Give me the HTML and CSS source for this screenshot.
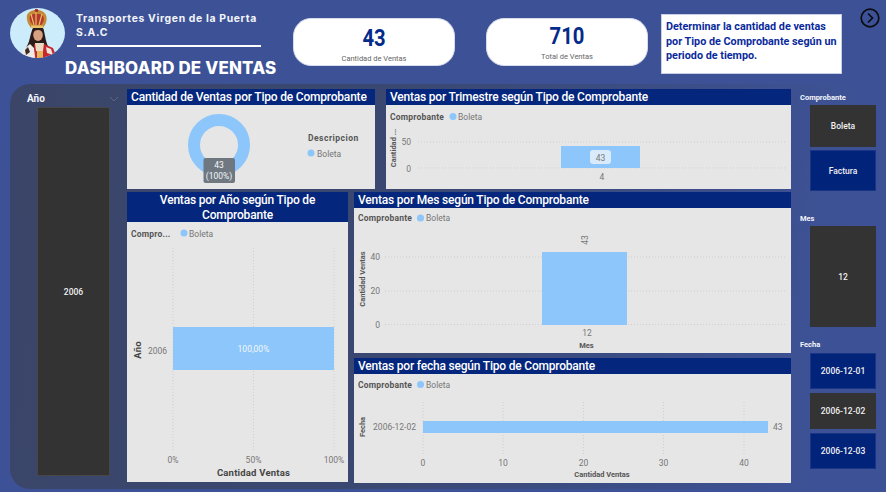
FILE: index.html
```html
<!DOCTYPE html>
<html lang="es">
<head>
<meta charset="utf-8">
<title>Dashboard de Ventas</title>
<link rel="stylesheet" href="styles.css">
</head>
<body>
<div class="page">
  <header class="top">
    <div class="brand">
      <svg class="logo" width="56" height="50" viewBox="0 0 56 50">
        <defs><clipPath id="lc"><ellipse cx="27.500" cy="25" rx="27.500" ry="25"/></clipPath></defs>
        <g clip-path="url(#lc)">
          <rect width="56" height="50" fill="#cdecfb"/>
          <path d="M23 20 C20 26 20 33 17 38 L12 46 L42 46 L37 36 C35 30 35 25 33 20 Z" fill="#2b1c1a"/>
          <path d="M10 50 L13 42 L20 36 L24 40 L26 50 Z" fill="#efe9e4"/>
          <path d="M15 42 L18 39 L20 44 L16 47 Z" fill="#3a2a2a"/>
          <path d="M24 36 L34 36 L43 40 L47 50 L25 50 Z" fill="#c8262e"/>
          <path d="M25 35 h9 l-1 8 h-7 z" fill="#e9d9c0"/>
          <path d="M27 43 h6 v7 h-6 z" fill="#e2b95e"/>
          <path d="M36 39 l5 2 l2 6 l-6 -2 z" fill="#f0e6dc"/>
          <ellipse cx="28" cy="27" rx="4.800" ry="6" fill="#d6a081"/>
          <path d="M23 25 C24 21 32 21 33 25 L33.500 21 L22.500 21 Z" fill="#2b1c1a"/>
          <path d="M17 7 C16 13 19 17 21 20 L33 20 C35 17 38 13 36 7 C34 3 30 2 27 2 C23 2 19 3 17 7 Z" fill="#c48a35"/>
          <path d="M20 8 C19 12 21 15 23 17 L31 17 C33 15 35 12 33 8 C31 5 22 5 20 8 Z" fill="#b5382e"/>
          <path d="M26 3 V17 M21 6 L24 17 M32 6 L29 17" stroke="#e6bd62" stroke-width="1.200" fill="none"/>
          <circle cx="26.500" cy="2.500" r="1.800" fill="#a8322a"/>
          <rect x="21" y="17.500" width="12" height="2.500" fill="#e8c266"/>
        </g>
      </svg>
      <div class="brand-text">
        <div class="company">Transportes Virgen de la Puerta<br>S.A.C</div>
        <div class="rule"></div>
      </div>
      <h1 class="title">DASHBOARD DE VENTAS</h1>
    </div>
    <div class="kpi kpi-first"><div class="kpi-value">43</div><div class="kpi-label">Cantidad de Ventas</div></div>
    <div class="kpi kpi-second"><div class="kpi-value">710</div><div class="kpi-label">Total de Ventas</div></div>
    <p class="note">Determinar la cantidad de ventas por Tipo de Comprobante según un periodo de tiempo.</p>
    <svg class="next" width="20" height="20" viewBox="0 0 20 20">
      <circle cx="10" cy="10" r="8.800" fill="none" stroke="#0b0b12" stroke-width="1.700"/>
      <path d="M8 5.500 L12.500 10 L8 14.500" fill="none" stroke="#0b0b12" stroke-width="1.700"/>
    </svg>
  </header>

  <main class="panel">
    <section class="year-slicer">
      <div class="year-head"><span class="slicer-label year-label">Año</span>
        <svg class="chev" width="10" height="6" viewBox="0 0 10 6"><path d="M1 1 L5 5 L9 1" fill="none" stroke="#5d6680" stroke-width="1"/></svg>
      </div>
      <div class="tile tile-dark year-tile">2006</div>
    </section>

    <section class="charts">
      <div class="row row-top">
        <article class="visual v-donut">
          <h2 class="vh">Cantidad de Ventas por Tipo de Comprobante</h2>
          <div class="vb">
            <svg width="248" height="84" viewBox="127 105 248 84">
              <circle cx="219" cy="145" r="25" fill="none" stroke="#8cc6fa" stroke-width="12"/>
              <rect x="203.500" y="158" width="31.500" height="25" rx="2" fill="#6f7881"/>
              <text class="t-w" x="219" y="168" text-anchor="middle">43</text>
              <text class="t-w" x="219" y="179" text-anchor="middle">(100%)</text>
              <text class="t-b t-lg" x="308" y="141">Descripcion</text>
              <circle cx="311" cy="153" r="3.500" fill="#8cc6fa"/>
              <text class="t-g" x="317" y="156.500">Boleta</text>
            </svg>
          </div>
        </article>
        <article class="visual v-quarter">
          <h2 class="vh">Ventas por Trimestre según Tipo de Comprobante</h2>
          <div class="vb">
            <svg width="405" height="84" viewBox="386 105 405 84">
              <text class="t-b" x="390" y="120">Comprobante</text>
              <circle cx="453" cy="116.500" r="3.500" fill="#8cc6fa"/>
              <text class="t-g" x="458" y="120">Boleta</text>
              <text class="t-bs" transform="translate(396 148) rotate(-90)" text-anchor="middle">Cantidad ...</text>
              <text class="t-g" x="411" y="145" text-anchor="end">50</text>
              <text class="t-g" x="411" y="172" text-anchor="end">0</text>
              <line class="gl" x1="418" y1="142" x2="786" y2="142"/>
              <line class="gl" x1="418" y1="168" x2="786" y2="168"/>
              <rect x="561" y="146" width="79" height="22" fill="#8cc6fa"/>
              <rect x="590" y="150" width="21" height="14" rx="3" fill="#d9ebfb"/>
              <text class="t-g" x="600.500" y="160.500" text-anchor="middle">43</text>
              <text class="t-g" x="602" y="180" text-anchor="middle">4</text>
            </svg>
          </div>
        </article>
      </div>
      <div class="row row-bottom">
        <article class="visual v-year">
          <h2 class="vh vh-center">Ventas por Año según Tipo de Comprobante</h2>
          <div class="vb">
            <svg width="221" height="260" viewBox="127 222 221 260">
              <text class="t-b" x="131" y="237">Compro...</text>
              <circle cx="184" cy="233" r="3.500" fill="#8cc6fa"/>
              <text class="t-g" x="189" y="237">Boleta</text>
              <line class="gl" x1="173" y1="248" x2="173" y2="450"/>
              <line class="gl" x1="253.500" y1="248" x2="253.500" y2="450"/>
              <line class="gl" x1="334" y1="248" x2="334" y2="450"/>
              <rect x="173" y="327" width="161" height="43" fill="#8cc6fa"/>
              <text class="t-w" x="253.500" y="352" text-anchor="middle">100,00%</text>
              <text class="t-g" x="157.500" y="354" text-anchor="middle">2006</text>
              <text class="t-bl" transform="translate(141 350) rotate(-90)" text-anchor="middle">Año</text>
              <text class="t-g" x="173" y="463" text-anchor="middle">0%</text>
              <text class="t-g" x="253.500" y="463" text-anchor="middle">50%</text>
              <text class="t-g" x="334" y="463" text-anchor="middle">100%</text>
              <text class="t-bl" x="253.500" y="476" text-anchor="middle">Cantidad Ventas</text>
            </svg>
          </div>
        </article>
        <div class="stack">
          <article class="visual v-month">
            <h2 class="vh">Ventas por Mes según Tipo de Comprobante</h2>
            <div class="vb">
              <svg width="437" height="144" viewBox="354 209 437 144">
                <text class="t-b" x="358" y="222">Comprobante</text>
                <circle cx="420.500" cy="219" r="3.500" fill="#8cc6fa"/>
                <text class="t-g" x="426" y="222">Boleta</text>
                <text class="t-bs" transform="translate(365 280) rotate(-90)" text-anchor="middle">Cantidad Ventas</text>
                <text class="t-g" x="380" y="261" text-anchor="end">40</text>
                <text class="t-g" x="380" y="295" text-anchor="end">20</text>
                <text class="t-g" x="380" y="329" text-anchor="end">0</text>
                <line class="gl" x1="385" y1="258" x2="786" y2="258"/>
                <line class="gl" x1="385" y1="292" x2="786" y2="292"/>
                <line class="gl" x1="385" y1="325.500" x2="786" y2="325.500"/>
                <rect x="542" y="253" width="85" height="73" fill="#8cc6fa"/>
                <text class="t-g" transform="translate(588 241) rotate(-90)" text-anchor="middle">43</text>
                <text class="t-g" x="587" y="337" text-anchor="middle">12</text>
                <text class="t-bs" x="586.500" y="349" text-anchor="middle">Mes</text>
              </svg>
            </div>
          </article>
          <article class="visual v-date">
            <h2 class="vh">Ventas por fecha según Tipo de Comprobante</h2>
            <div class="vb">
              <svg width="437" height="108" viewBox="354 375 437 108">
                <text class="t-b" x="358" y="389">Comprobante</text>
                <circle cx="420.500" cy="385.500" r="3.500" fill="#8cc6fa"/>
                <text class="t-g" x="426" y="389">Boleta</text>
                <line class="gl" x1="423" y1="403" x2="423" y2="455"/>
                <line class="gl" x1="503" y1="403" x2="503" y2="455"/>
                <line class="gl" x1="583.500" y1="403" x2="583.500" y2="455"/>
                <line class="gl" x1="663.500" y1="403" x2="663.500" y2="455"/>
                <line class="gl" x1="744" y1="403" x2="744" y2="455"/>
                <rect x="423" y="422" width="345" height="12" fill="#8cc6fa"/>
                <text class="t-bs" transform="translate(365 428) rotate(-90)" text-anchor="middle">Fecha</text>
                <text class="t-g" x="416" y="431" text-anchor="end">2006-12-02</text>
                <text class="t-g" x="773" y="431">43</text>
                <text class="t-g" x="423" y="467" text-anchor="middle">0</text>
                <text class="t-g" x="503" y="467" text-anchor="middle">10</text>
                <text class="t-g" x="583.500" y="467" text-anchor="middle">20</text>
                <text class="t-g" x="663.500" y="467" text-anchor="middle">30</text>
                <text class="t-g" x="744" y="467" text-anchor="middle">40</text>
                <text class="t-bs" x="602" y="478" text-anchor="middle">Cantidad Ventas</text>
              </svg>
            </div>
          </article>
        </div>
      </div>
    </section>

    <aside class="side">
      <div class="slicer s-comp">
        <div class="slicer-label">Comprobante</div>
        <div class="tile tile-dark t-43">Boleta</div>
        <div class="tile tile-navy t-41">Factura</div>
      </div>
      <div class="slicer s-month">
        <div class="slicer-label">Mes</div>
        <div class="tile tile-dark t-101">12</div>
      </div>
      <div class="slicer s-date">
        <div class="slicer-label">Fecha</div>
        <div class="tile tile-navy t-36">2006-12-01</div>
        <div class="tile tile-dark t-36">2006-12-02</div>
        <div class="tile tile-navy t-36">2006-12-03</div>
      </div>
    </aside>
  </main>
</div>
</body>
</html>
```

FILE: styles.css
```css
* { box-sizing: border-box; }
html, body { margin: 0; padding: 0; }
body { width: 886px; height: 492px; overflow: hidden; background: #3d5296; font-family: "Roboto", "Liberation Sans", sans-serif; }
.page { width: 886px; height: 492px; display: flex; flex-direction: column; }

/* header band */
.top { height: 84px; display: flex; align-items: flex-start; flex: none; }
.brand { width: 293px; height: 84px; padding: 8px 0 0 10px; display: grid; grid-template-columns: 66px 1fr; grid-template-rows: 42px auto; flex: none; }
.logo { grid-row: 1 / 2; grid-column: 1; }
.brand-text { grid-column: 2; padding-top: 4px; }
.company { font-family: "Inter", sans-serif; font-weight: 700; font-size: 10.400px; line-height: 14px; color: #f2f4fa; white-space: nowrap; letter-spacing: .65px; }
.rule { width: 184px; height: 2px; background: #fff; margin-top: 5px; margin-left: 1px; }
.title { grid-column: 1 / 3; margin: 8px 0 0 55px; font-family: "Inter", sans-serif; font-weight: 800; font-size: 16.900px; line-height: 20px; color: #fff; white-space: nowrap; letter-spacing: .2px; }
.kpi { width: 162px; height: 48px; margin-top: 18px; background: #fff; border-radius: 18px; border: 1px solid #d5dbea; text-align: center; color: #042a8a; flex: none; }
.kpi-second { margin-left: 31px; }
.kpi-value { font-weight: 700; font-size: 23px; line-height: 26px; margin-top: 7px; transform: scaleX(.88); }
.kpi-label { font-size: 7.500px; line-height: 10px; color: #666; margin-top: 2px; }
.kpi-second .kpi-value { margin-top: 5px; }
.note { width: 181px; height: 60px; margin: 14px 0 0 13px; padding: 5px 3px 0 4px; background: #fff; border: 1px solid #c9d0e4; color: #0a2a9c; font-weight: 700; font-size: 10.800px; line-height: 14.500px; flex: none; }
.next { margin: 8px 0 0 18px; flex: none; }

/* dark canvas */
.panel { flex: none; width: 876px; height: 405px; margin-left: 10px; display: flex; border-radius: 20px 0 0 20px; background: linear-gradient(97deg, #3a4568 0%, #3a4872 45%, #3d5296 92%); }
.year-slicer { width: 117px; flex: none; padding: 7px 8px 0 17px; }
.year-head { display: flex; justify-content: space-between; align-items: center; height: 16px; }
.year-tile { width: 73px; height: 369px; margin-left: 10px; border: 1px solid #474747; }
.slicer-label { font-weight: 700; font-size: 7.500px; line-height: 10px; color: #f3f5fb; }
.year-label { font-size: 10px; line-height: 14px; }

.tile { display: flex; align-items: center; justify-content: center; font-size: 8.500px; color: #f1f1f1; font-weight: 500; }
.tile-dark { background: #333; }
.tile-navy { background: #02237a; border: 1px solid #1a3585; }

.charts { width: 664px; flex: none; display: flex; flex-direction: column; padding-top: 5px; gap: 3px; }
.row { display: flex; }
.row-top { gap: 11px; height: 100px; }
.row-bottom { gap: 6px; height: 291px; }
.visual { display: flex; flex-direction: column; flex: none; }
.v-donut { width: 248px; }
.v-quarter { width: 405px; }
.v-year { width: 221px; height: 290px; }
.stack { width: 437px; display: flex; flex-direction: column; gap: 5px; }
.v-month { height: 161px; }
.v-date { height: 125px; }
.vh { margin: 0; background: #04267c; color: #fff; font-weight: 500; font-size: 12px; line-height: 16px; letter-spacing: -.2px; padding: 0 4px; white-space: nowrap; height: 16px; flex: none; }
.vh-center { white-space: normal; text-align: center; height: 30px; line-height: 14.500px; padding: 1px 30px 0; }
.vb { flex: 1; background: #e6e6e6; border: 0; }
.vb svg { display: block; }

.t-g { font-size: 8.500px; fill: #777; }
.t-w { font-size: 8.500px; fill: #f4f7fb; }
.t-b { font-size: 8.500px; font-weight: 700; fill: #555; letter-spacing: .2px; }
.t-lg { letter-spacing: .5px; }
.t-bl { font-size: 9.500px; font-weight: 700; fill: #444; letter-spacing: .2px; }
.t-bs { font-size: 7.500px; font-weight: 700; fill: #555; }
.gl { stroke: #cfcfcf; stroke-width: 1; stroke-dasharray: 1 2; }

.side { width: 95px; flex: none; padding: 9px 0 0 9px; display: flex; flex-direction: column; }
.slicer { display: flex; flex-direction: column; }
.slicer .tile { width: 66px; margin-left: 10px; }
.s-comp { gap: 2px; height: 98px; }
.t-43 { height: 43px; }
.t-41 { height: 41px; margin-top: 1px; }
.s-month { margin-top: 23px; gap: 2px; }
.t-101 { height: 101px; }
.s-date { margin-top: 13px; gap: 4px; }
.s-date .slicer-label { margin-bottom: -1px; }
.t-36 { height: 36px; }
```
